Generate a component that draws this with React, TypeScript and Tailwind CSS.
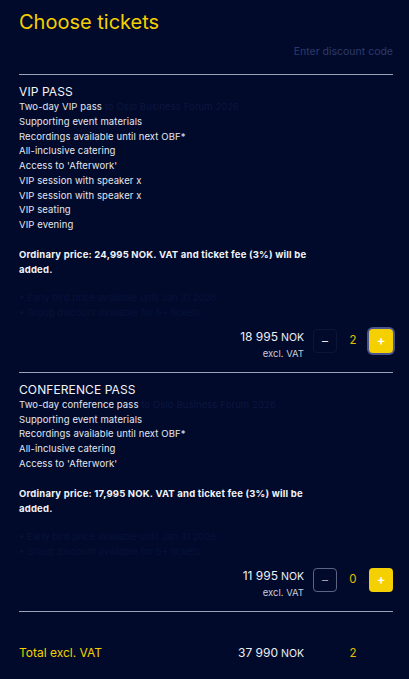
import React from "react";

type Ticket = {
  title: string;
  first: string;
  faintFirst: string;
  items: string[];
  ordinary: string;
  price: string;
  count: number;
  active: boolean;
};

const tickets: Ticket[] = [
  {
    title: "VIP PASS",
    first: "Two-day VIP pass",
    faintFirst: " to Oslo Business Forum 2026",
    items: [
      "Supporting event materials",
      "Recordings available until next OBF*",
      "All-inclusive catering",
      "Access to 'Afterwork'",
      "VIP session with speaker x",
      "VIP session with speaker x",
      "VIP seating",
      "VIP evening",
    ],
    ordinary: "Ordinary price: 24,995 NOK. VAT and ticket fee (3%) will be added.",
    price: "18 995",
    count: 2,
    active: true,
  },
  {
    title: "CONFERENCE PASS",
    first: "Two-day conference pass",
    faintFirst: " to Oslo Business Forum 2026",
    items: [
      "Supporting event materials",
      "Recordings available until next OBF*",
      "All-inclusive catering",
      "Access to 'Afterwork'",
    ],
    ordinary: "Ordinary price: 17,995 NOK. VAT and ticket fee (3%) will be added.",
    price: "11 995",
    count: 0,
    active: false,
  },
];

function TicketBlock({ t }: { t: Ticket }) {
  return (
    <div className="border-b border-[#9ea2b6] pb-[11px]">
      <h2 className="mt-[9px] text-[12px] leading-4 text-[#f2f3f7] tracking-[0.1px]">{t.title}</h2>
      <ul className="text-[9.5px] leading-[14.75px] text-[#e4e6ee] tracking-[0.1px]">
        <li>
          {t.first}
          <span className="text-[#0b1640]">{t.faintFirst}</span>
        </li>
        {t.items.map((it, i) => (
          <li key={i}>{it}</li>
        ))}
      </ul>
      <p className="mt-[14px] w-[300px] text-[9.5px] leading-[15px] font-bold text-[#f2f3f7] tracking-[0.2px]">
        {t.ordinary}
      </p>
      <ul className="mt-[13px] text-[9.5px] leading-[15px] text-[#08123a]">
        <li>• Early bird price available until Jan 31 2026</li>
        <li>• Group discount available for 5+ tickets</li>
      </ul>
      <div className="mt-2 flex items-start justify-end">
        <div className="flex flex-col items-end">
          <div className="text-[12px] leading-[18px] text-[#eceef4]">
            {t.price}
            <span className="text-[10.5px]"> NOK</span>
          </div>
          <div className="text-[9.5px] leading-[14px] text-[#c9ccd8]">excl. VAT</div>
        </div>
        <div className="ml-[9px] mt-px flex items-center">
          <button
            className={
              t.active
                ? "flex h-6 w-6 items-center justify-center rounded-[4px] border border-[#0d1535] text-[12px] leading-none text-[#e8e9ef]"
                : "flex h-6 w-6 items-center justify-center rounded-[4px] border border-[#5d6380] text-[12px] leading-none text-[#9ba0b4]"
            }
          >
            –
          </button>
          <span className="w-8 text-center text-[11.5px] leading-none text-[#e0c000]">{t.count}</span>
          <button
            className={
              t.active
                ? "flex h-6 w-6 items-center justify-center rounded-[4px] bg-[#f5d000] text-[13px] leading-none font-semibold text-white ring-2 ring-[#4a5590]"
                : "flex h-6 w-6 items-center justify-center rounded-[4px] bg-[#f5d000] text-[13px] leading-none font-semibold text-white"
            }
          >
            +
          </button>
        </div>
      </div>
    </div>
  );
}

export default function App() {
  return (
    <div
      className="min-h-[679px] w-[409px] bg-[#010a2b] pl-[19px] pr-4"
      style={{ fontFamily: "Inter, 'Noto Sans', sans-serif" }}
    >
      <h1 className="pt-2 text-[20px] leading-7 text-[#f5d000]">Choose tickets</h1>
      <div className="mt-[7px] text-right text-[10.5px] leading-[18px] text-[#2d3a6a]">Enter discount code</div>
      <div className="mt-[13px] border-b border-[#9ea2b6]" />
      {tickets.map((t, i) => (
        <TicketBlock key={i} t={t} />
      ))}
      <div className="mt-[31px] flex items-center text-[12px] leading-5">
        <span className="flex-1 text-[#f5d000]">Total excl. VAT</span>
        <span className="text-[#eceef4]">
          37 990<span className="text-[10.5px]"> NOK</span>
        </span>
        <span className="ml-[9px] w-[80px] pr-6 text-center text-[11.5px] text-[#e0c000]">
          <span className="ml-6 inline-block w-8 text-center">2</span>
        </span>
      </div>
    </div>
  );
}
